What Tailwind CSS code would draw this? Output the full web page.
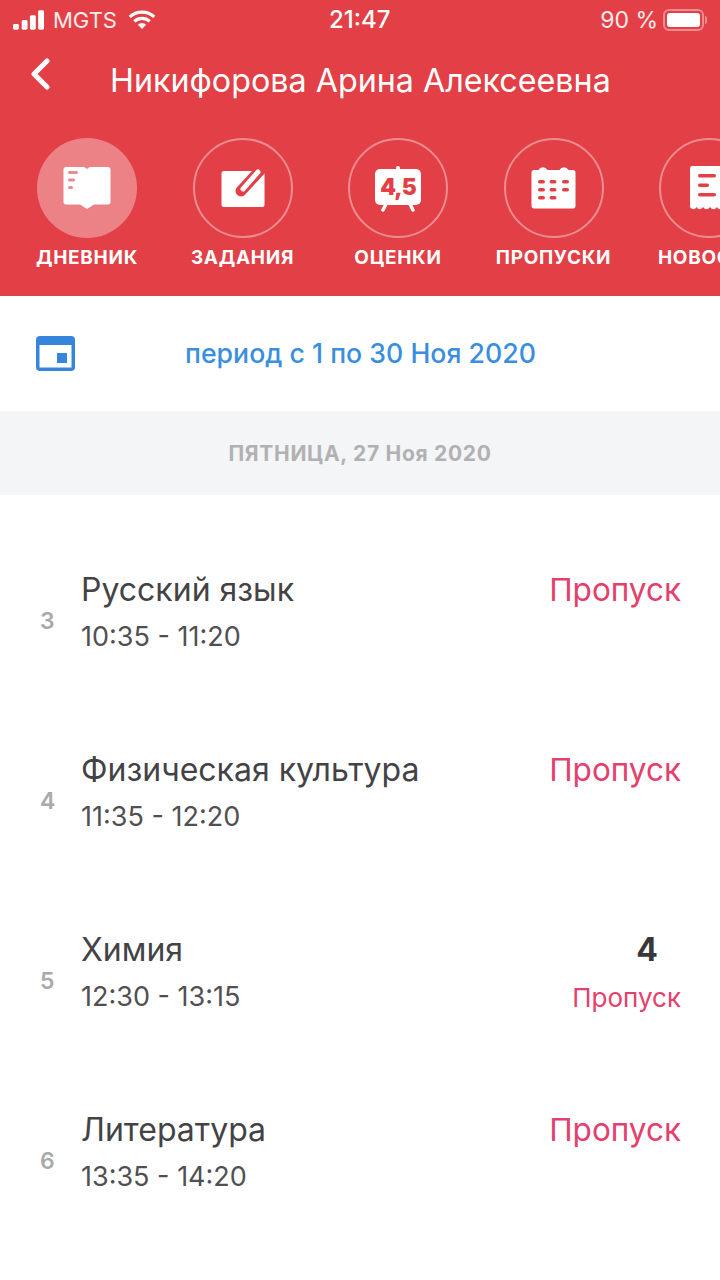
<!DOCTYPE html>
<html lang="en">
<head>
    <meta charset="UTF-8">
    <meta name="viewport" content="width=device-width, initial-scale=1.0">
    <title>Дневник</title>
    <script src="https://cdn.jsdelivr.net/npm/@tailwindcss/browser@4"></script>
</head>
<body class="bg-white font-['Inter',sans-serif] w-[720px] h-[1280px] overflow-hidden">

    <!-- Red header -->
    <div class="bg-[#e24046] h-[296px] text-white overflow-hidden">
        <!-- Status bar -->
        <div class="h-[40px] flex items-center justify-between pl-[13px] pr-[13px] text-[23px] leading-none relative">
            <div class="flex items-center">
                <svg width="31" height="20" viewBox="0 0 32 20" fill="#fff"><rect x="0" y="14" width="6" height="6" rx="1.5"/><rect x="9" y="10" width="6" height="10" rx="1.5"/><rect x="17.500" y="5" width="6" height="15" rx="1.500"/><rect x="26" y="0" width="6" height="20" rx="1.500"/></svg>
                <span class="ml-[9px] font-normal text-[22px] text-white/90">MGTS</span>
                <svg class="ml-[11px]" width="28" height="20" viewBox="0 0 30 22" fill="none" stroke="#fff" stroke-width="3.500"><path d="M1.500 7.500C9 .5 21 .5 28.500 7.500"/><path d="M6.500 12.500c4.800-4.300 12.200-4.300 17 0"/><path d="M15 21l-4.500-4.800c2.600-2 6.400-2 9 0z" fill="#fff" stroke="none"/></svg>
            </div>
            <span class="absolute left-[329px] top-[8px] text-[24px] font-medium">21:47</span>
            <div class="flex items-center">
                <span class="text-white/90">90 %</span>
                <div class="ml-[5px] w-[41px] h-[22px] rounded-[6px] border-2 border-white/40 p-[2px]">
                    <div class="w-full h-full bg-white rounded-[3px]"></div>
                </div>
                <div class="ml-[1px] w-[2px] h-[8px] bg-white/40 rounded-r"></div>
            </div>
        </div>
        <!-- Title -->
        <div class="h-[82px] flex items-center relative">
            <svg class="absolute left-[30px] top-[18px]" width="20" height="32" viewBox="0 0 20 32" fill="none" stroke="#fff" stroke-width="5" stroke-linecap="round" stroke-linejoin="round"><path d="M17 3L4 16l13 13"/></svg>
            <h1 class="ml-[110px] text-[32.250px] leading-none font-normal whitespace-nowrap">Никифорова Арина Алексеевна</h1>
        </div>
        <!-- Sections -->
        <div class="flex pl-[37px] gap-[55.500px] mt-[16px]">
            <div class="w-[100px] shrink-0 flex flex-col items-center">
                <div class="w-[100px] h-[100px] rounded-full bg-white/35 flex items-center justify-center">
                    <svg width="48" height="42" viewBox="0 0 48 42"><path fill="#fff" d="M3 0h17c2 0 3.500 1 4 2.500C24.500 1 26 0 28 0h17c1.500 0 2.500 1 2.500 2.500V35c0 1.500-1 2.500-2.500 2.500H31L24 42l-7-4.500H3C1.500 37.500.5 36.500.5 35V2.500C.5 1 1.500 0 3 0z"/><g fill="#ec8a8d"><rect x="5" y="4" width="10" height="3" rx="1.500"/><rect x="5" y="11.500" width="7" height="3" rx="1.500"/><rect x="5" y="19" width="5" height="3" rx="1.500"/></g></svg>
                </div>
                <span class="mt-[8px] text-[19px] font-bold tracking-[0.7px] leading-[24px] whitespace-nowrap">ДНЕВНИК</span>
            </div>
            <div class="w-[100px] shrink-0 flex flex-col items-center">
                <div class="w-[100px] h-[100px] rounded-full border-2 border-white/40 flex items-center justify-center">
                    <svg width="44" height="42" viewBox="0 0 44 42"><rect x="0.500" y="4" width="43" height="36" rx="2.500" fill="#fff"/><path fill="none" stroke="#e24046" stroke-width="11" stroke-linecap="round" d="M20 24L44 -2"/><path fill="none" stroke="#fff" stroke-width="5" stroke-linecap="round" d="M22 22L37 5"/></svg>
                </div>
                <span class="mt-[8px] text-[19px] font-bold tracking-[0.7px] leading-[24px] whitespace-nowrap">ЗАДАНИЯ</span>
            </div>
            <div class="w-[100px] shrink-0 flex flex-col items-center">
                <div class="w-[100px] h-[100px] rounded-full border-2 border-white/40 flex items-center justify-center">
                    <div class="relative w-[46px] h-[44px]">
                        <svg width="46" height="46" viewBox="0 0 46 46" class="absolute left-0 top-0"><circle cx="23" cy="2" r="2" fill="#fff"/><rect x="0" y="3" width="46" height="36" rx="5" fill="#fff"/><path d="M11 38l-3 6M35 38l3 6" stroke="#fff" stroke-width="3.500" stroke-linecap="round"/></svg>
                        <span class="absolute inset-x-0 top-[8px] text-center text-[#e24046] text-[22.500px] leading-[26px] font-black tracking-[-1px]">4,5</span>
                    </div>
                </div>
                <span class="mt-[8px] text-[19px] font-bold tracking-[0.7px] leading-[24px] whitespace-nowrap">ОЦЕНКИ</span>
            </div>
            <div class="w-[100px] shrink-0 flex flex-col items-center">
                <div class="w-[100px] h-[100px] rounded-full border-2 border-white/40 flex items-center justify-center">
                    <svg width="45" height="42" viewBox="0 0 45 42"><path fill="#fff" d="M3 3h4.500a5 5 0 0 1 9 0h12a5 5 0 0 1 9 0H42c1.500 0 2.500 1 2.500 2.500V39c0 1.500-1 2.500-2.500 2.500H3C1.500 41.500.5 40.500.5 39V5.500C.5 4 1.500 3 3 3z"/><g fill="#e24046"><rect x="7" y="13" width="7" height="3.500" rx="1.700"/><rect x="18.500" y="13" width="7" height="3.500" rx="1.700"/><rect x="31" y="13" width="7" height="3.500" rx="1.700"/><rect x="7" y="21" width="7" height="3.500" rx="1.700"/><rect x="18.500" y="21" width="7" height="3.500" rx="1.700"/><rect x="31" y="21" width="7" height="3.500" rx="1.700"/><rect x="7" y="29" width="7" height="3.500" rx="1.700"/><rect x="18.500" y="29" width="7" height="3.500" rx="1.700"/></g></svg>
                </div>
                <span class="mt-[8px] text-[19px] font-bold tracking-[0.7px] leading-[24px] whitespace-nowrap">ПРОПУСКИ</span>
            </div>
            <div class="w-[100px] shrink-0 flex flex-col items-center">
                <div class="w-[100px] h-[100px] rounded-full border-2 border-white/40 flex items-center justify-center">
                    <svg class="ml-[1px]" width="40" height="44" viewBox="0 0 40 44"><path fill="#fff" d="M2 0h36c1 0 2 1 2 2v39c-2.500 3-4.500 3-6.500 0-2.500 3-4.500 3-6.500 0-2.500 3-4.500 3-7 0-2.500 3-4.500 3-7 0-2.500 3-4.500 3-6.500 0-2 3-4 3-6.500 0V2c0-1 1-2 2-2z"/><g fill="#e24046"><rect x="8" y="8" width="18" height="3.500" rx="1.700"/><rect x="8" y="17.500" width="11" height="3.500" rx="1.700"/><rect x="8" y="27" width="18" height="3.500" rx="1.700"/></g></svg>
                </div>
                <span class="mt-[8px] text-[19px] font-bold tracking-[0.7px] leading-[24px] whitespace-nowrap">НОВОСТИ</span>
            </div>
        </div>
    </div>

    <!-- Period -->
    <div class="h-[115px] flex items-center relative">
        <svg class="ml-[36px] -mt-[1px]" width="39" height="35" viewBox="0 0 39 35"><rect width="39" height="35" rx="4" fill="#3585dc"/><rect x="3.500" y="9" width="32" height="22.500" fill="#fff"/><rect x="21" y="17" width="10" height="10" fill="#3585dc"/></svg>
        <span class="absolute left-[185px] top-[44px] text-[26.700px] leading-none text-[#3a8ede] font-medium whitespace-nowrap">период с 1 по 30 Ноя 2020</span>
    </div>

    <!-- Date -->
    <div class="h-[84px] bg-[#f4f5f6] flex items-center justify-center pt-[2px] text-[21px] font-bold tracking-[0.7px] text-[#b1b1b3]">ПЯТНИЦА, 27 Ноя 2020</div>

    <!-- Lessons -->
    <div class="pt-[35px]">
        <div class="h-[180px] flex items-start">
            <span class="w-[81px] pl-[40px] mt-[76px] text-[23px] leading-[30px] font-semibold text-[#a9a9ab]">3</span>
            <div class="flex-1 mt-[40px]">
                <div class="text-[32px] leading-[40px] text-[#434345]">Русский язык</div>
                <div class="text-[27px] leading-[36px] mt-[9px] text-[#505052]">10:35 - 11:20</div>
            </div>
            <div class="mt-[40px] pr-[39px] text-[31.500px] leading-[40px] text-[#e5406d]">Пропуск</div>
        </div>
        <div class="h-[180px] flex items-start">
            <span class="w-[81px] pl-[40px] mt-[76px] text-[23px] leading-[30px] font-semibold text-[#a9a9ab]">4</span>
            <div class="flex-1 mt-[40px]">
                <div class="text-[32px] leading-[40px] text-[#434345]">Физическая культура</div>
                <div class="text-[27px] leading-[36px] mt-[9px] text-[#505052]">11:35 - 12:20</div>
            </div>
            <div class="mt-[40px] pr-[39px] text-[31.500px] leading-[40px] text-[#e5406d]">Пропуск</div>
        </div>
        <div class="h-[180px] flex items-start">
            <span class="w-[81px] pl-[40px] mt-[76px] text-[23px] leading-[30px] font-semibold text-[#a9a9ab]">5</span>
            <div class="flex-1 mt-[40px]">
                <div class="text-[32px] leading-[40px] text-[#434345]">Химия</div>
                <div class="text-[27px] leading-[36px] mt-[9px] text-[#505052]">12:30 - 13:15</div>
            </div>
            <div class="mt-[40px] pr-[39px] flex flex-col items-end">
                <span class="pr-[23px] text-[32px] leading-[40px] font-bold text-[#38383a]">4</span>
                <span class="mt-[13px] text-[26px] leading-[30px] text-[#e5406d]">Пропуск</span>
            </div>
        </div>
        <div class="h-[180px] flex items-start">
            <span class="w-[81px] pl-[40px] mt-[76px] text-[23px] leading-[30px] font-semibold text-[#a9a9ab]">6</span>
            <div class="flex-1 mt-[40px]">
                <div class="text-[32px] leading-[40px] text-[#434345]">Литература</div>
                <div class="text-[27px] leading-[36px] mt-[9px] text-[#505052]">13:35 - 14:20</div>
            </div>
            <div class="mt-[40px] pr-[39px] text-[31.500px] leading-[40px] text-[#e5406d]">Пропуск</div>
        </div>
    </div>

</body>
</html>
